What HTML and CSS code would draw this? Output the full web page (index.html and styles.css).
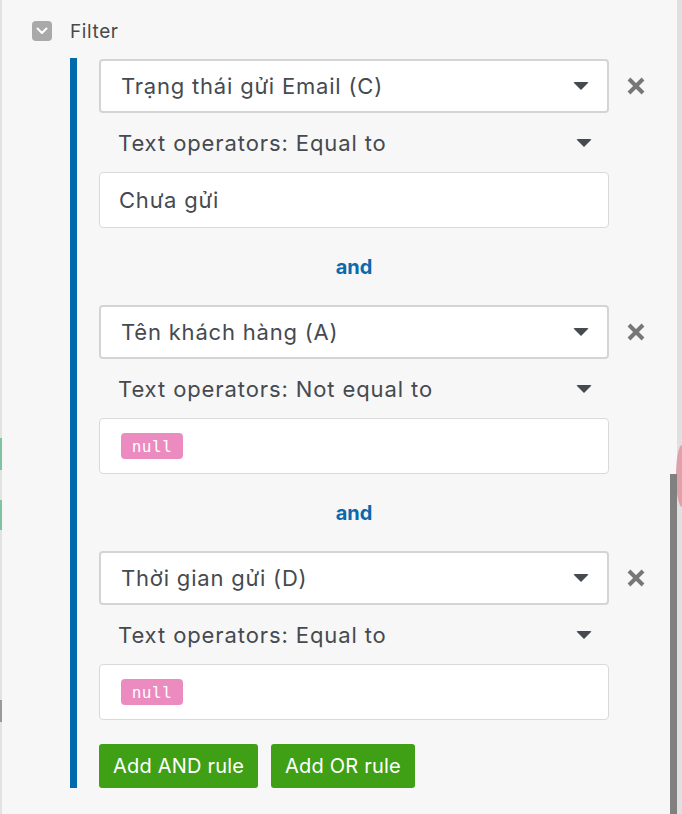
FILE: index.html
```html
<!DOCTYPE html>
<html lang="vi">
<head>
    <meta charset="UTF-8">
    <meta name="viewport" content="width=device-width, initial-scale=1.0">
    <title>Filter</title>
    <link rel="stylesheet" href="styles.css">
</head>
<body>

<div class="edge-left">
    <span class="tab tab-1"></span>
    <span class="tab tab-2"></span>
    <span class="tab tab-3"></span>
</div>

<div class="panel">
    <!-- Tiêu đề -->
    <div class="filter-head">
        <span class="toggle">
            <svg width="12" height="8" viewBox="0 0 12 8"><path d="M1.5 1.5 L6 6 L10.5 1.5" fill="none" stroke="#fff" stroke-width="2" stroke-linecap="round" stroke-linejoin="round"/></svg>
        </span>
        <span class="filter-title">Filter</span>
    </div>

    <div class="rule-group">
        <!-- Rule 1 -->
        <div class="rule">
            <div class="rule-top">
                <div class="field-select">
                    <span>Trạng thái gửi Email (C)</span>
                    <span class="caret"></span>
                </div>
                <svg class="remove" width="20" height="20" viewBox="0 0 20 20"><path d="M3 3 L17 17 M17 3 L3 17" stroke="#777" stroke-width="4"/></svg>
            </div>
            <div class="operator">
                <span>Text operators: Equal to</span>
                <span class="caret"></span>
            </div>
            <div class="value">Chưa gửi</div>
        </div>

        <div class="joiner">and</div>

        <!-- Rule 2 -->
        <div class="rule">
            <div class="rule-top">
                <div class="field-select">
                    <span>Tên khách hàng (A)</span>
                    <span class="caret"></span>
                </div>
                <svg class="remove" width="20" height="20" viewBox="0 0 20 20"><path d="M3 3 L17 17 M17 3 L3 17" stroke="#777" stroke-width="4"/></svg>
            </div>
            <div class="operator">
                <span>Text operators: Not equal to</span>
                <span class="caret"></span>
            </div>
            <div class="value"><span class="null-tag">null</span></div>
        </div>

        <div class="joiner">and</div>

        <!-- Rule 3 -->
        <div class="rule">
            <div class="rule-top">
                <div class="field-select">
                    <span>Thời gian gửi (D)</span>
                    <span class="caret"></span>
                </div>
                <svg class="remove" width="20" height="20" viewBox="0 0 20 20"><path d="M3 3 L17 17 M17 3 L3 17" stroke="#777" stroke-width="4"/></svg>
            </div>
            <div class="operator">
                <span>Text operators: Equal to</span>
                <span class="caret"></span>
            </div>
            <div class="value"><span class="null-tag">null</span></div>
        </div>

        <div class="actions">
            <button type="button" class="btn-add">Add AND rule</button>
            <button type="button" class="btn-add">Add OR rule</button>
        </div>
    </div>
</div>

<div class="edge-right">
    <span class="bubble"></span>
</div>
<span class="scrollbar"></span>

</body>
</html>
```

FILE: styles.css
```css
html, body {
    height: 100%;
}
body {
    margin: 0;
    background-color: #f7f7f7;
    font-family: Inter, "Noto Sans", sans-serif;
    color: #454a50;
    display: flex;
    overflow: hidden;
}
.edge-left {
    width: 2px;
    flex-shrink: 0;
    background-color: #e2e2e2;
    position: relative;
}
.tab {
    position: absolute;
    left: 0;
    width: 2px;
    background-color: #7fc4a0;
}
.tab-1 { top: 438px; height: 32px; }
.tab-2 { top: 500px; height: 30px; }
.tab-3 { top: 700px; height: 22px; background-color: #9a9a9a; }

.panel {
    flex: 1;
    padding: 21px 0 0 30px;
}
.filter-head {
    display: flex;
    align-items: center;
    gap: 18px;
    height: 20px;
}
.toggle {
    width: 20px;
    height: 20px;
    border-radius: 4px;
    background-color: #a9a9a9;
    display: flex;
    align-items: center;
    justify-content: center;
}
.filter-title {
    font-size: 19px;
    letter-spacing: 0.6px;
    color: #4a4a4a;
}

.rule-group {
    margin: 17px 0 0 38px;
    border-left: 7px solid #006bac;
    padding: 1px 0 0 22px;
    width: 550px;
}
.rule-top {
    display: flex;
    align-items: center;
    gap: 17px;
}
.field-select {
    width: 510px;
    height: 54px;
    box-sizing: border-box;
    border: 2px solid #d4d4d4;
    border-radius: 4px;
    background-color: #fff;
    padding: 0 18px 0 20px;
    display: flex;
    align-items: center;
    justify-content: space-between;
    font-size: 22px;
    letter-spacing: 0.8px;
    color: #454a50;
}
.caret {
    width: 0;
    height: 0;
    border-left: 8px solid transparent;
    border-right: 8px solid transparent;
    border-top: 8px solid #454a50;
    border-radius: 2px;
}
.remove {
    flex-shrink: 0;
}
.operator {
    width: 510px;
    height: 59px;
    box-sizing: border-box;
    padding: 0 17px 0 19px;
    display: flex;
    align-items: center;
    justify-content: space-between;
    font-size: 22px;
    letter-spacing: 0.9px;
}
.value {
    width: 510px;
    height: 56px;
    box-sizing: border-box;
    border: 1px solid #dadada;
    border-radius: 4px;
    background-color: #fff;
    padding: 0 19px;
    display: flex;
    align-items: center;
    font-size: 22px;
    letter-spacing: 0.8px;
}
.null-tag {
    margin-left: 2px;
    width: 62px;
    height: 26px;
    border-radius: 4px;
    background-color: #eb8bc0;
    color: #fff;
    font-family: "DejaVu Sans Mono", monospace;
    font-size: 16px;
    letter-spacing: 0.5px;
    display: flex;
    align-items: center;
    justify-content: center;
}
.joiner {
    width: 510px;
    height: 77px;
    display: flex;
    align-items: center;
    justify-content: center;
    font-size: 20px;
    font-weight: bold;
    color: #0a6aad;
}
.actions {
    display: flex;
    gap: 13px;
    padding: 24px 0 0;
}
.btn-add {
    height: 44px;
    padding: 0 14px;
    border: none;
    border-radius: 3px;
    background-color: #3fa016;
    color: #fff;
    font-family: Inter, "Noto Sans", sans-serif;
    font-size: 20px;
    letter-spacing: 0.2px;
    cursor: pointer;
}

.edge-right {
    width: 5px;
    flex-shrink: 0;
    background-color: #e0e0e0;
    position: relative;
}
.bubble {
    position: absolute;
    left: -1px;
    top: 445px;
    width: 6px;
    height: 62px;
    border-radius: 100% 0 0 100% / 50% 0 0 50%;
    background-color: #e0a1aa;
}
.scrollbar {
    position: absolute;
    left: 670px;
    top: 474px;
    width: 7px;
    height: 340px;
    background-color: #808080;
}
```
